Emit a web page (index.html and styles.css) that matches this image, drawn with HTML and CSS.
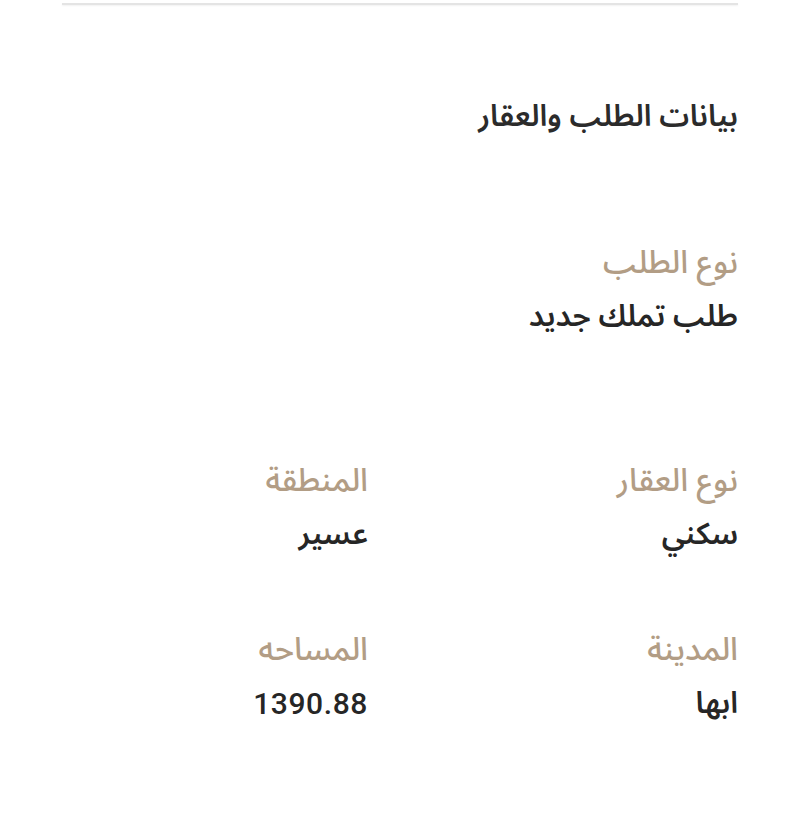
FILE: index.html
```html
<!DOCTYPE html>
<html lang="ar" dir="rtl">
<head>
<meta charset="utf-8">
<link rel="stylesheet" href="styles.css">
</head>
<body>
<div class="page">
  <div class="topline"></div>
  <h1 class="title">بيانات الطلب والعقار</h1>
  <div class="field single">
    <div class="label">نوع الطلب</div>
    <div class="value">طلب تملك جديد</div>
  </div>
  <div class="grid">
    <div class="field">
      <div class="label">نوع العقار</div>
      <div class="value">سكني</div>
    </div>
    <div class="field">
      <div class="label">المنطقة</div>
      <div class="value">عسير</div>
    </div>
    <div class="field">
      <div class="label">المدينة</div>
      <div class="value">ابها</div>
    </div>
    <div class="field">
      <div class="label">المساحه</div>
      <div class="value num">1390.88</div>
    </div>
  </div>
</div>
</body>
</html>
```
FILE: styles.css
```css
html, body {
  margin: 0;
  padding: 0;
  background: #ffffff;
}
body {
  font-family: "Noto Sans Arabic", "DejaVu Sans", "Noto Sans", sans-serif;
  color: #2a2a2a;
}
.page {
  width: 676px;
  margin: 0 auto;
  padding-top: 3px;
}
.topline {
  height: 2px;
  background: #e4e4e4;
  box-shadow: 0 1px 2px rgba(0,0,0,0.06);
}
.title {
  margin: 89px 0 0 0;
  font-size: 30px;
  font-weight: 600;
  line-height: 46px;
  color: #2b2b2b;
}
.field {
  display: flex;
  flex-direction: column;
  gap: 8px;
}
.single {
  margin-top: 100px;
}
.label {
  font-size: 32px;
  font-weight: 500;
  line-height: 46px;
  color: #b29d85;
}
.value {
  font-size: 30px;
  font-weight: 600;
  line-height: 46px;
  color: #262626;
}
.num {
  font-family: Roboto, "Liberation Sans", sans-serif;
  font-size: 30px;
  font-weight: 500;
  letter-spacing: 0.6px;
}
.grid {
  margin-top: 118px;
  display: grid;
  grid-template-columns: 306px 306px;
  column-gap: 64px;
  row-gap: 69px;
}
```
